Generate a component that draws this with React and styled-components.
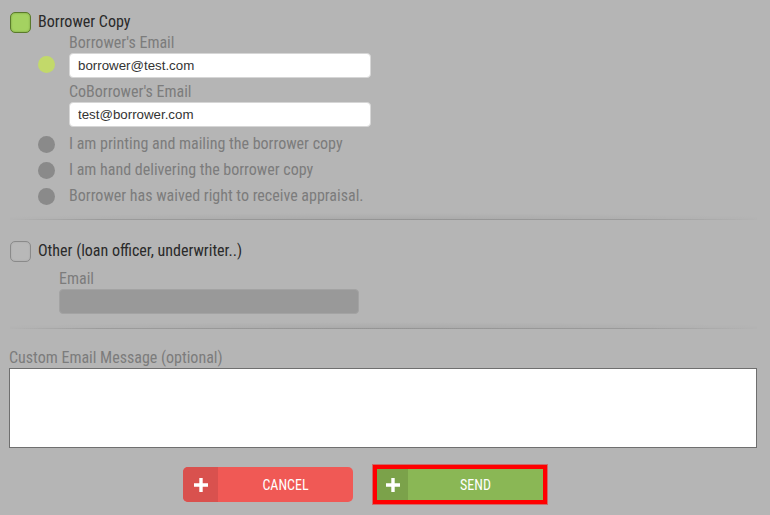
import styled, { createGlobalStyle } from "styled-components";

const GlobalStyle = createGlobalStyle`
  html, body {
    margin: 0;
    padding: 0;
    background: #b5b5b5;
  }
  body {
    font-family: "Roboto Condensed", Roboto, "Liberation Sans", sans-serif;
    font-stretch: 75%;
  }
`;

const PlusIcon = () => (
  <svg width="14" height="14" viewBox="0 0 14 14">
    <path d="M7 0v14M0 7h14" stroke="#fff" strokeWidth="3.4" />
  </svg>
);

const App = () => {
  return (
    <Page>
      <GlobalStyle />
      <CheckRow>
        <Checkbox checked />
        <CheckLabel>Borrower Copy</CheckLabel>
      </CheckRow>

      <OptionRow>
        <Radio active top={23} />
        <Fields>
          <FieldLabel>Borrower's Email</FieldLabel>
          <TextInput defaultValue="borrower@test.com" />
          <FieldLabel spaced>CoBorrower's Email</FieldLabel>
          <TextInput defaultValue="test@borrower.com" />
        </Fields>
      </OptionRow>

      <RadioList>
        <OptionRow>
          <Radio />
          <OptionText>I am printing and mailing the borrower copy</OptionText>
        </OptionRow>
        <OptionRow>
          <Radio />
          <OptionText>I am hand delivering the borrower copy</OptionText>
        </OptionRow>
        <OptionRow>
          <Radio />
          <OptionText>Borrower has waived right to receive appraisal.</OptionText>
        </OptionRow>
      </RadioList>

      <Divider />

      <CheckRow other>
        <Checkbox />
        <CheckLabel>Other (loan officer, underwriter..)</CheckLabel>
      </CheckRow>
      <OtherFields>
        <FieldLabel>Email</FieldLabel>
        <TextInput disabled />
      </OtherFields>

      <Divider small />

      <MessageLabel>Custom Email Message (optional)</MessageLabel>
      <MessageBox />

      <Actions>
        <ActionButton color="#f05955" iconColor="#d9514e">
          <IconPart>
            <PlusIcon />
          </IconPart>
          <ButtonText>CANCEL</ButtonText>
        </ActionButton>
        <SendFrame>
          <ActionButton color="#8ab755" iconColor="#7ba24a" flat>
            <IconPart>
              <PlusIcon />
            </IconPart>
            <ButtonText>SEND</ButtonText>
          </ActionButton>
        </SendFrame>
      </Actions>
    </Page>
  );
};

const Page = styled.div`
  width: 770px;
  height: 515px;
  box-sizing: border-box;
  padding: 12px 13px 0 9px;
  overflow: hidden;
`;

const CheckRow = styled.div`
  display: flex;
  align-items: center;
  gap: 7px;
  margin-left: 1px;
  height: 21px;
  margin-top: ${(p) => (p.other ? "20px" : "0")};
`;

const Checkbox = styled.span`
  width: 21px;
  height: 21px;
  box-sizing: border-box;
  border-radius: 5px;
  border: 1px solid ${(p) => (p.checked ? "#5a7a2c" : "#8a8a8a")};
  background: ${(p) => (p.checked ? "#a4d261" : "#b8b8b8")};
  box-shadow: inset 0 0 2px ${(p) => (p.checked ? "rgba(60,90,20,0.5)" : "rgba(0,0,0,0.1)")};
`;

const CheckLabel = styled.span`
  font-size: 16px;
  color: #2a2a2a;
  line-height: 21px;
  margin-top: -2px;
`;

const OptionRow = styled.div`
  display: flex;
  align-items: flex-start;
  padding-left: 29px;
  gap: 14px;
`;

const Radio = styled.span`
  flex: none;
  width: 17px;
  height: 17px;
  border-radius: 50%;
  margin-top: ${(p) => (p.top ? `${p.top}px` : "4.5px")};
  background: ${(p) => (p.active ? "#c2d96a" : "#8a8a8a")};
`;

const Fields = styled.div`
  display: flex;
  flex-direction: column;
  width: 302px;
`;

const FieldLabel = styled.label`
  font-size: 16px;
  line-height: 20px;
  color: #7c7c7c;
  margin-top: ${(p) => (p.spaced ? "4px" : "0")};
`;

const TextInput = styled.input`
  box-sizing: border-box;
  width: 100%;
  height: 25px;
  margin: 0;
  padding: 0 8px;
  border-radius: 4px;
  border: 1px solid ${(p) => (p.disabled ? "#a3a3a3" : "#d6d6d6")};
  background: ${(p) => (p.disabled ? "#999999" : "#ffffff")};
  font-family: "Liberation Sans", Arial, sans-serif;
  font-stretch: normal;
  font-size: 13.3px;
  color: #333;
  outline: none;
`;

const RadioList = styled.div`
  margin-top: 4px;
  display: flex;
  flex-direction: column;
`;

const OptionText = styled.span`
  font-size: 16px;
  line-height: 26px;
  color: #7c7c7c;
`;

const Divider = styled.div`
  height: ${(p) => (p.small ? "15px" : "11px")};
  margin-left: 1px;
  border-bottom: 1px solid transparent;
  background:
    linear-gradient(to right, rgba(0, 0, 0, 0) 0%, rgba(0, 0, 0, 0.12) 12%, rgba(0, 0, 0, 0.12) 82%, rgba(0, 0, 0, 0) 100%) bottom / 100% 1px no-repeat,
    radial-gradient(ellipse 60% 100% at 50% 100%, rgba(0, 0, 0, 0.07), rgba(0, 0, 0, 0) 100%) bottom / 100% 7px no-repeat;
`;

const OtherFields = styled.div`
  display: flex;
  flex-direction: column;
  width: 300px;
  margin: 7px 0 0 50px;
`;

const MessageLabel = styled.div`
  margin-top: 18px;
  font-size: 16px;
  line-height: 20px;
  color: #7c7c7c;
`;

const MessageBox = styled.textarea`
  display: block;
  box-sizing: border-box;
  width: 748px;
  height: 80px;
  margin: 0;
  border: 1px solid #6f6f6f;
  background: #fff;
  resize: none;
  outline: none;
`;

const Actions = styled.div`
  display: flex;
  align-items: center;
  gap: 20px;
  margin-top: 17px;
  padding-left: 174px;
`;

const ActionButton = styled.button`
  display: flex;
  align-items: stretch;
  padding: 0;
  width: ${(p) => (p.flat ? "166px" : "170px")};
  height: ${(p) => (p.flat ? "31px" : "35px")};
  border: none;
  border-radius: ${(p) => (p.flat ? "0" : "5px")};
  overflow: hidden;
  background: ${(p) => p.color};
  cursor: pointer;

  & > span:first-child {
    background: ${(p) => p.iconColor};
    width: ${(p) => (p.flat ? "31px" : "35px")};
  }
`;

const IconPart = styled.span`
  display: flex;
  align-items: center;
  justify-content: center;
  flex: none;
`;

const ButtonText = styled.span`
  flex: 1;
  display: flex;
  align-items: center;
  justify-content: center;
  color: #fff;
  font-family: "Roboto Condensed", Roboto, sans-serif;
  font-stretch: 75%;
  font-size: 14px;
`;

const SendFrame = styled.div`
  border: 4px solid #ff0000;
  box-shadow: 0 0 0 1px rgba(220, 60, 60, 0.6);
`;

export default App;
